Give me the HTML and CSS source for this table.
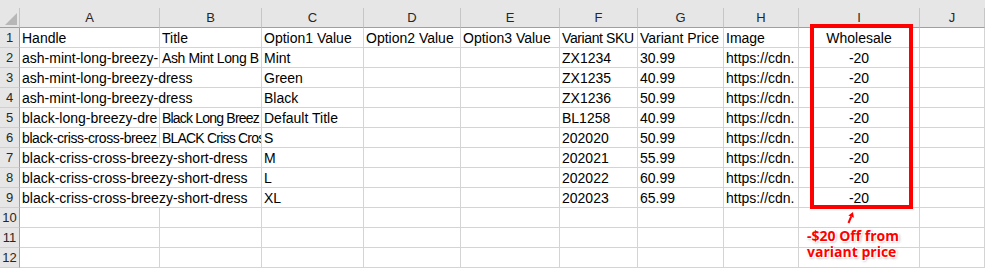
FILE: index.html
```html
<!DOCTYPE html>
<html lang="en">
  <head>
    <meta charset="UTF-8" />
    <meta name="viewport" content="width=device-width, initial-scale=1.0" />
    <title>products_import.csv</title>
    <link rel="stylesheet" href="styles.css">
  </head>
  <body>
    <div class="sheet">
      <div class="topbar"></div>

      <div class="grid">
        <!-- column letters -->
        <div class="corner"><span class="select-all"></span></div>
        <div class="colhead">A</div>
        <div class="colhead">B</div>
        <div class="colhead">C</div>
        <div class="colhead">D</div>
        <div class="colhead">E</div>
        <div class="colhead">F</div>
        <div class="colhead">G</div>
        <div class="colhead">H</div>
        <div class="colhead">I</div>
        <div class="colhead">J</div>

        <!-- row 1 -->
        <div class="rowhead">1</div>
        <div class="cell">Handle</div>
        <div class="cell">Title</div>
        <div class="cell">Option1 Value</div>
        <div class="cell">Option2 Value</div>
        <div class="cell">Option3 Value</div>
        <div class="cell tight">Variant SKU</div>
        <div class="cell">Variant Price</div>
        <div class="cell">Image</div>
        <div class="cell center">Wholesale</div>
        <div class="cell"></div>

        <!-- row 2 -->
        <div class="rowhead">2</div>
        <div class="cell">ash-mint-long-breezy-</div>
        <div class="cell tight">Ash Mint Long B</div>
        <div class="cell">Mint</div>
        <div class="cell"></div>
        <div class="cell"></div>
        <div class="cell">ZX1234</div>
        <div class="cell">30.99</div>
        <div class="cell">https://cdn.</div>
        <div class="cell center">-20</div>
        <div class="cell"></div>

        <!-- row 3 -->
        <div class="rowhead">3</div>
        <div class="cell span2">ash-mint-long-breezy-dress</div>
        <div class="cell">Green</div>
        <div class="cell"></div>
        <div class="cell"></div>
        <div class="cell">ZX1235</div>
        <div class="cell">40.99</div>
        <div class="cell">https://cdn.</div>
        <div class="cell center">-20</div>
        <div class="cell"></div>

        <!-- row 4 -->
        <div class="rowhead">4</div>
        <div class="cell span2">ash-mint-long-breezy-dress</div>
        <div class="cell">Black</div>
        <div class="cell"></div>
        <div class="cell"></div>
        <div class="cell">ZX1236</div>
        <div class="cell">50.99</div>
        <div class="cell">https://cdn.</div>
        <div class="cell center">-20</div>
        <div class="cell"></div>

        <!-- row 5 -->
        <div class="rowhead">5</div>
        <div class="cell">black-long-breezy-dre</div>
        <div class="cell tighter">Black Long Breez</div>
        <div class="cell">Default Title</div>
        <div class="cell"></div>
        <div class="cell"></div>
        <div class="cell">BL1258</div>
        <div class="cell">40.99</div>
        <div class="cell">https://cdn.</div>
        <div class="cell center">-20</div>
        <div class="cell"></div>

        <!-- row 6 -->
        <div class="rowhead">6</div>
        <div class="cell tight">black-criss-cross-breez</div>
        <div class="cell tighter">BLACK Criss Cros</div>
        <div class="cell">S</div>
        <div class="cell"></div>
        <div class="cell"></div>
        <div class="cell">202020</div>
        <div class="cell">50.99</div>
        <div class="cell">https://cdn.</div>
        <div class="cell center">-20</div>
        <div class="cell"></div>

        <!-- row 7 -->
        <div class="rowhead">7</div>
        <div class="cell span2">black-criss-cross-breezy-short-dress</div>
        <div class="cell">M</div>
        <div class="cell"></div>
        <div class="cell"></div>
        <div class="cell">202021</div>
        <div class="cell">55.99</div>
        <div class="cell">https://cdn.</div>
        <div class="cell center">-20</div>
        <div class="cell"></div>

        <!-- row 8 -->
        <div class="rowhead">8</div>
        <div class="cell span2">black-criss-cross-breezy-short-dress</div>
        <div class="cell">L</div>
        <div class="cell"></div>
        <div class="cell"></div>
        <div class="cell">202022</div>
        <div class="cell">60.99</div>
        <div class="cell">https://cdn.</div>
        <div class="cell center">-20</div>
        <div class="cell"></div>

        <!-- row 9 -->
        <div class="rowhead">9</div>
        <div class="cell span2">black-criss-cross-breezy-short-dress</div>
        <div class="cell">XL</div>
        <div class="cell"></div>
        <div class="cell"></div>
        <div class="cell">202023</div>
        <div class="cell">65.99</div>
        <div class="cell">https://cdn.</div>
        <div class="cell center">-20</div>
        <div class="cell"></div>

        <!-- empty rows -->
        <div class="rowhead">10</div>
        <div class="cell"></div><div class="cell"></div><div class="cell"></div><div class="cell"></div><div class="cell"></div>
        <div class="cell"></div><div class="cell"></div><div class="cell"></div><div class="cell"></div><div class="cell"></div>

        <div class="rowhead">11</div>
        <div class="cell"></div><div class="cell"></div><div class="cell"></div><div class="cell"></div><div class="cell"></div>
        <div class="cell"></div><div class="cell"></div><div class="cell"></div><div class="cell"></div><div class="cell"></div>

        <div class="rowhead">12</div>
        <div class="cell"></div><div class="cell"></div><div class="cell"></div><div class="cell"></div><div class="cell"></div>
        <div class="cell"></div><div class="cell"></div><div class="cell"></div><div class="cell"></div><div class="cell"></div>
      </div>

      <!-- callout over the Wholesale column -->
      <div class="highlight"></div>
      <svg class="pointer" width="14" height="16" viewBox="0 0 14 16">
        <line x1="5.5" y1="14" x2="8.2" y2="7.5" stroke="#fff" stroke-width="3.5" stroke-linecap="round" />
        <line x1="5.5" y1="14" x2="8.2" y2="7.5" stroke="#f00" stroke-width="2" />
        <polygon points="10,3 10.9,8.8 5.4,6.5" fill="#f00" />
      </svg>
      <div class="note">-$20 Off from<br />variant price</div>
    </div>
  </body>
</html>
```

FILE: styles.css
```css
* {
  margin: 0;
  padding: 0;
  box-sizing: border-box;
}

body {
  background: #fff;
  font-family: "Liberation Sans", Arial, sans-serif;
  overflow: hidden;
}

.sheet {
  position: relative;
  width: 985px;
  height: 268px;
  overflow: hidden;
}

.topbar {
  height: 8px;
  background: #e6e6e6;
}

/* 시트 격자 */
.grid {
  display: grid;
  grid-template-columns: 20px 140px 102px 102px 97px 99px 78px 86px 75px 121px 1fr;
  grid-auto-rows: 20px;
}

.corner {
  display: flex;
  justify-content: flex-end;
  align-items: flex-end;
  padding: 0 2px 2px 0;
  background: #e6e6e6;
  border-right: 1px solid #c6c6c6;
  border-bottom: 1px solid #9f9f9f;
}

.select-all {
  width: 12px;
  height: 12px;
  background: #b7b7b7;
  clip-path: polygon(100% 0, 100% 100%, 0 100%);
}

.colhead {
  background: #e6e6e6;
  border-right: 1px solid #c6c6c6;
  border-bottom: 1px solid #9f9f9f;
  color: #262626;
  font-size: 13px;
  line-height: 19px;
  text-align: center;
}

.rowhead {
  background: #e6e6e6;
  border-right: 1px solid #9f9f9f;
  border-bottom: 1px solid #d0d0d0;
  color: #262626;
  font-size: 13px;
  line-height: 18px;
  padding-top: 1px;
  text-align: center;
}

.cell {
  border-right: 1px solid #d4d4d4;
  border-bottom: 1px solid #d4d4d4;
  color: #000;
  font-size: 14px;
  line-height: 18px;
  padding: 1px 0 0 2px;
  white-space: nowrap;
  overflow: hidden;
}

.span2 {
  grid-column: span 2;
}

.center {
  text-align: center;
  padding-left: 0;
}

/* 좁은 칸에 들어가는 긴 글자 */
.tight {
  letter-spacing: -0.4px;
}

.tighter {
  letter-spacing: -0.8px;
}

/* 빨간 강조 상자와 설명 */
.highlight {
  position: absolute;
  left: 810px;
  top: 24px;
  width: 103px;
  height: 185px;
  border: 4px solid #f00;
}

.pointer {
  position: absolute;
  left: 843px;
  top: 209px;
}

.note {
  position: absolute;
  left: 807px;
  top: 228px;
  color: #f00;
  font-family: "Open Sans", "Liberation Sans", sans-serif;
  font-weight: 700;
  font-size: 14px;
  line-height: 16px;
  white-space: nowrap;
  text-shadow: -1px -1px 0 #fff, 1px -1px 0 #fff, -1px 1px 0 #fff, 1px 1px 0 #fff,
    1px 1px 3px rgba(0, 0, 0, 0.45);
}
```
